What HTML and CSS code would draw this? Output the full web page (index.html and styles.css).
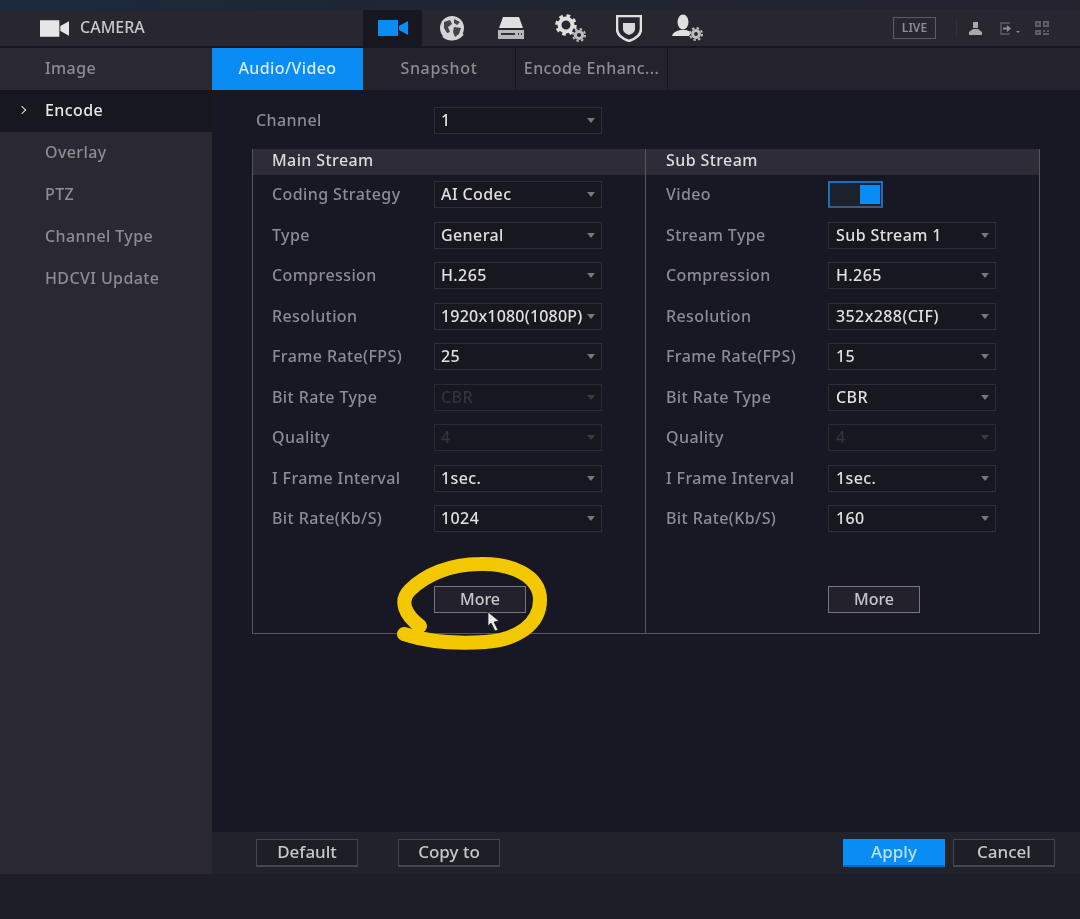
FILE: index.html
```html
<!DOCTYPE html>
<html lang="en">
<head>
  <meta charset="UTF-8">
  <title>Camera Encode</title>
  <link rel="stylesheet" href="styles.css">
</head>
<body>

<div class="page">
  <div class="top-strip"></div>

  <header class="header">
    <div class="brand">
      <svg class="brand-icon" viewBox="0 0 30 17"><path d="M0 0h20v17H0z M21 6l9-5v15l-9-5z" fill="#e6e6e6"/></svg>
      <span>CAMERA</span>
    </div>

    <nav class="nav">
      <div class="nav-item active">
        <svg width="30" height="16" viewBox="0 0 30 16"><path d="M0 0h20v16H0z M21 6l9-5v14l-9-5z" fill="#0a8cf5"/></svg>
      </div>
      <div class="nav-item">
        <svg width="30" height="30" viewBox="0 0 30 30">
          <circle cx="15" cy="15" r="12" fill="#d4d4d6"/>
          <path d="M7 9l6-2 2 4-4 3 2 5-3 1-3-5z M17 6l6 3-3 3-3-2z M17 14l7 1-2 6-4 3-2-5z" fill="#45444c"/>
          <path d="M6 23c5 5 14 5 20-2" fill="none" stroke="#d4d4d6" stroke-width="2"/>
        </svg>
      </div>
      <div class="nav-item">
        <svg width="28" height="22" viewBox="0 0 28 22">
          <path d="M6 0h16l4 11H2z" fill="#e0e0e0"/>
          <path d="M1 13h26v9H1z" fill="#b8b8bc"/>
          <path d="M4 16h14v2H4z M21 16h1v2h-1z M24 16h1v2h-1z" fill="#33323a"/>
        </svg>
      </div>
      <div class="nav-item">
        <svg width="32" height="28" viewBox="0 0 32 28">
          <circle cx="12" cy="11" r="6.5" fill="none" stroke="#e0e0e0" stroke-width="4"/>
          <circle cx="12" cy="11" r="9" fill="none" stroke="#e0e0e0" stroke-width="3.5" stroke-dasharray="3.6 3.5"/>
          <circle cx="25" cy="21" r="3.6" fill="none" stroke="#bdbdc0" stroke-width="3"/>
          <circle cx="25" cy="21" r="6" fill="none" stroke="#bdbdc0" stroke-width="2" stroke-dasharray="2.4 2.3"/>
        </svg>
      </div>
      <div class="nav-item">
        <svg width="26" height="27" viewBox="0 0 26 27">
          <path d="M1 1h24v13c0 6-6 10-12 12C7 24 1 20 1 14z" fill="none" stroke="#e0e0e0" stroke-width="2.6"/>
          <path d="M7 8h12v6c0 3-3 5-6 6-3-1-6-3-6-6z" fill="#d8d8d8"/>
        </svg>
      </div>
      <div class="nav-item">
        <svg width="32" height="28" viewBox="0 0 32 28">
          <ellipse cx="11" cy="8" rx="5.5" ry="7.5" fill="#e0e0e0"/>
          <path d="M0 22c1-4 5-5 8-6h6c2 .5 4 1 5 3l-2 3z" fill="#e0e0e0"/>
          <circle cx="24" cy="20" r="3.4" fill="none" stroke="#bdbdc0" stroke-width="3"/>
          <circle cx="24" cy="20" r="6" fill="none" stroke="#bdbdc0" stroke-width="2" stroke-dasharray="2.4 2.3"/>
        </svg>
      </div>
    </nav>

    <div class="tools">
      <span class="live">LIVE</span>
      <span class="tool-sep"></span>
      <svg class="tool-user" width="13" height="13" viewBox="0 0 13 13"><path d="M4 0h5v6H4z M0 10l4-3h5l4 3v3H0z" fill="#a8a8ac"/></svg>
      <svg class="tool-exit" width="20" height="13" viewBox="0 0 20 13">
        <path d="M10 1H1v11h9" fill="none" stroke="#5e5d65" stroke-width="1.4"/>
        <path d="M3 5.500h4V3l4 3.500-4 3.500V7.500H3z" fill="#8d8c94"/>
        <path d="M16 9h4l-2 2z" fill="#8d8c94"/>
      </svg>
      <svg class="tool-qr" width="14" height="14" viewBox="0 0 14 14">
        <path d="M0 0h6v6H0z M8 0h6v6H8z M0 9h6v5H0z M8 9h2v2H8z M12 9h2v2h-2z M8 12h6v2H8z" fill="#5e5d65"/>
        <path d="M2 2h2v2H2z M10 2h2v2h-2z M2 11h2v1H2z" fill="#2a2932"/>
      </svg>
    </div>
  </header>

  <div class="body">
    <aside class="sidebar">
      <div class="side-item">Image</div>
      <div class="side-item active">Encode</div>
      <div class="side-item">Overlay</div>
      <div class="side-item">PTZ</div>
      <div class="side-item">Channel Type</div>
      <div class="side-item">HDCVI Update</div>
    </aside>

    <main class="main">
      <div class="tabs">
        <div class="tab active">Audio/Video</div>
        <div class="tab snapshot">Snapshot</div>
        <div class="tab last">Encode Enhanc...</div>
      </div>

      <div class="content">
        <div class="channel">
          <label class="channel-label">Channel</label>
          <div class="select">1</div>
        </div>

        <div class="streams">
          <section class="stream">
            <h3 class="stream-title">Main Stream</h3>
            <div class="fields">
              <label>Coding Strategy</label><div class="select">AI Codec</div>
              <label>Type</label><div class="select">General</div>
              <label>Compression</label><div class="select">H.265</div>
              <label>Resolution</label><div class="select tight">1920x1080(1080P)</div>
              <label>Frame Rate(FPS)</label><div class="select">25</div>
              <label>Bit Rate Type</label><div class="select disabled">CBR</div>
              <label>Quality</label><div class="select disabled">4</div>
              <label>I Frame Interval</label><div class="select">1sec.</div>
              <label>Bit Rate(Kb/S)</label><div class="select">1024</div>
            </div>
            <button class="more">More</button>
          </section>

          <section class="stream sub">
            <h3 class="stream-title">Sub Stream</h3>
            <div class="fields">
              <label>Video</label><div class="toggle"><span class="knob"></span></div>
              <label>Stream Type</label><div class="select">Sub Stream 1</div>
              <label>Compression</label><div class="select">H.265</div>
              <label>Resolution</label><div class="select">352x288(CIF)</div>
              <label>Frame Rate(FPS)</label><div class="select">15</div>
              <label>Bit Rate Type</label><div class="select">CBR</div>
              <label>Quality</label><div class="select disabled">4</div>
              <label>I Frame Interval</label><div class="select">1sec.</div>
              <label>Bit Rate(Kb/S)</label><div class="select">160</div>
            </div>
            <button class="more">More</button>
          </section>
        </div>
      </div>

      <footer class="footer">
        <button class="btn">Default</button>
        <button class="btn copy">Copy to</button>
        <button class="btn primary">Apply</button>
        <button class="btn">Cancel</button>
      </footer>
    </main>
  </div>

  <div class="bottom-strip"></div>

  <!-- hand drawn marker ring and mouse pointer sit on top of the ui -->
  <svg class="marker" width="1080" height="919" viewBox="0 0 1080 919">
    <path d="M404 634C425 641 455 644 485 642C516 640 540 625 540 600C540 575 510 563 480 564C450 564 425 575 410 590C399 601 405 615 420 626" fill="none" stroke="#f4c800" stroke-width="14" stroke-linecap="round"/>
    <path d="M488 612l0 14 3-3 4 8 3-1-4-8 5-1z" fill="#eee" stroke="#222" stroke-width=".8"/>
  </svg>
</div>

</body>
</html>
```

FILE: styles.css
```css
* {
  box-sizing: border-box;
}
body {
  margin: 0;
  background: #1e1e28;
  font-family: "Noto Sans", sans-serif;
  font-size: 16px;
  font-weight: 500;
  letter-spacing: 0.4px;
  color: #8d8c94;
}
.page {
  position: relative;
  width: 1080px;
  height: 919px;
  overflow: hidden;
  filter: blur(0.6px);
  display: grid;
  grid-template-rows: 10px 38px 826px 45px;
}
.top-strip {
  background: linear-gradient(90deg, #1b2a3c, #202433 50%, #24232e);
}
.bottom-strip {
  background: #1e1e28;
}

/* header */
.header {
  display: flex;
  align-items: center;
  background: #282730;
  border-bottom: 2px solid #17171f;
}
.brand {
  width: 363px;
  padding-left: 40px;
  padding-bottom: 2px;
  display: flex;
  align-items: center;
  gap: 11px;
  font-size: 16px;
  letter-spacing: 0;
  color: #c8c8cc;
}
.brand-icon {
  width: 29px;
  height: 17px;
  margin-top: 2px;
}
.nav {
  display: flex;
  height: 100%;
}
.nav-item {
  width: 59px;
  display: flex;
  align-items: center;
  justify-content: center;
}
.nav-item.active {
  background: #17171f;
}
.tools {
  margin-left: auto;
  padding-right: 31px;
  display: flex;
  align-items: center;
}
.live {
  width: 43px;
  height: 22px;
  border: 1px solid #5e5d65;
  font-size: 12px;
  font-weight: 600;
  letter-spacing: 0;
  line-height: 19px;
  text-align: center;
  color: #8d8c94;
}
.tool-sep {
  width: 1px;
  height: 20px;
  margin: 0 12px 0 20px;
  background: #33323a;
}
.tool-exit {
  margin-left: 18px;
}
.tool-qr {
  margin-left: 15px;
}

/* sidebar */
.body {
  display: flex;
}
.sidebar {
  width: 212px;
  background: #2a2932;
}
.side-item {
  height: 42px;
  line-height: 40px;
  padding-left: 45px;
}
.side-item.active {
  position: relative;
  background: #17171f;
  color: #e8e8e8;
}
.side-item.active::before {
  content: "";
  position: absolute;
  left: 19px;
  top: 17px;
  width: 5px;
  height: 5px;
  border-top: 1.5px solid #ddd;
  border-right: 1.5px solid #ddd;
  transform: rotate(45deg);
}

/* main area */
.main {
  flex: 1;
  display: flex;
  flex-direction: column;
  background: #181824;
}
.tabs {
  display: flex;
  height: 42px;
  background: #24232c;
  line-height: 40px;
}
.tab {
  width: 153px;
  text-align: center;
  border-right: 1px solid #17171f;
  white-space: nowrap;
}
.tab.active {
  width: 151px;
  background: #0a8cf5;
  color: #d8eeff;
  border-right: 0;
}
.tab.snapshot {
  letter-spacing: 0.7px;
}
.tab.last {
  width: 152px;
}
.content {
  flex: 1;
  padding: 17px 40px 0;
}
.channel {
  display: flex;
  align-items: center;
}
.channel-label {
  width: 182px;
  padding: 0 0 2px 4px;
}
.select {
  position: relative;
  flex: none;
  width: 168px;
  height: 27px;
  padding-left: 6px;
  border: 1px solid #2e2e38;
  background: #17171f;
  color: #e0e0e2;
  line-height: 24px;
  white-space: nowrap;
}
.select::after {
  content: "";
  position: absolute;
  right: 6px;
  top: 10px;
  border-left: 4px solid transparent;
  border-right: 4px solid transparent;
  border-top: 5px solid #77767e;
}
.select.tight {
  letter-spacing: 0.2px;
}
.select.disabled {
  color: #33333c;
  border-color: #2a2a34;
}
.select.disabled::after {
  border-top-color: #3b3b44;
}

/* stream table */
.streams {
  display: flex;
  width: 788px;
  height: 485px;
  margin-top: 15px;
  border: 1px solid #55555c;
  border-top: 0;
}
.stream {
  width: 392px;
  display: flex;
  flex-direction: column;
  align-items: flex-start;
}
.stream.sub {
  flex: 1;
  border-left: 1px solid #55555c;
}
.stream-title {
  align-self: stretch;
  height: 26px;
  margin: 0;
  padding-left: 19px;
  background: #2e2d37;
  color: #dcdcde;
  font-size: 16px;
  font-weight: 500;
  line-height: 23px;
}
.sub .stream-title {
  padding-left: 20px;
}
.fields {
  display: grid;
  grid-template-columns: 162px 168px;
  grid-auto-rows: 27px;
  row-gap: 13.5px;
  margin-top: 6px;
  padding-left: 19px;
  align-items: center;
}
.sub .fields {
  padding-left: 20px;
}
.sub .select {
  padding-left: 7px;
}
.fields label {
  padding-bottom: 1px;
  white-space: nowrap;
}
.toggle {
  display: flex;
  justify-content: flex-end;
  width: 55px;
  height: 27px;
  padding: 2px 1px;
  background: #1c222c;
  border: 2px solid #1a6fc0;
  border-bottom-color: #3c5a78;
}
.knob {
  width: 20px;
  background: #0a8cf5;
}
.more {
  width: 92px;
  height: 27px;
  margin: 54px 0 0 181px;
  padding: 0 0 2px;
  background: #23222c;
  border: 1px solid #77767e;
  color: #c8c8cc;
  font: inherit;
}
.sub .more {
  margin-left: 182px;
}

/* footer buttons */
.footer {
  display: flex;
  align-items: center;
  height: 42px;
  padding: 0 25px 0 44px;
  background: #22222b;
}
.btn {
  width: 102px;
  height: 28px;
  padding: 0 0 2px;
  background: #1e1e27;
  border: 1px solid #46454d;
  border-bottom-width: 2px;
  color: #c8c8cc;
  font: inherit;
  font-size: 17px;
}
.btn.copy {
  margin-left: 40px;
}
.btn.primary {
  margin-left: auto;
  margin-right: 8px;
  background: #0a8cf5;
  border-color: #0a8cf5;
  border-bottom-color: #0868b8;
  color: #b8e0ff;
}

.marker {
  position: absolute;
  left: 0;
  top: 0;
  pointer-events: none;
}
```
